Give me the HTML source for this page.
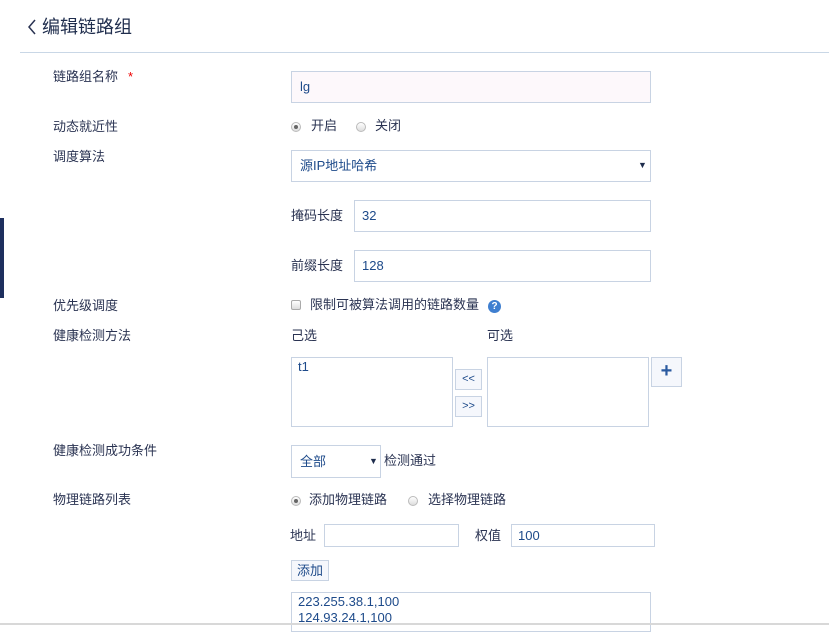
<!DOCTYPE html>
<html><head><meta charset="utf-8"><style>
*{margin:0;padding:0;box-sizing:border-box}
body{width:829px;height:625px;overflow:hidden;background:#fff;position:relative;font-family:"Liberation Sans","Noto Sans CJK SC",sans-serif;font-size:13px;color:#2a3352}
.a{position:absolute;white-space:nowrap;line-height:16px}
.box{position:absolute;border:1px solid #c8d3e3;background:#fff}
.v{color:#1d4a8a}
.rad{position:absolute;width:10px;height:10px;border-radius:50%;border:1px solid #bbb;background:linear-gradient(#fff,#ddd)}
.rad.on::after{content:"";position:absolute;left:2px;top:2px;width:4px;height:4px;border-radius:50%;background:#666}
.btn{position:absolute;border:1px solid #c8d3e3;background:#f5f7fc;color:#1d4a8a;text-align:center}
</style></head><body>
<svg style="position:absolute;left:27px;top:19px" width="10" height="16"><path d="M8 1 L2 8 L8 15" stroke="#2a3352" stroke-width="1.5" fill="none"/></svg>
<div class="a" style="left:42px;top:15px;font-size:18px;line-height:24px;color:#1f2d4d">编辑链路组</div>
<div style="position:absolute;left:20px;top:52px;width:809px;height:1px;background:#c9d7e6"></div>
<div style="position:absolute;left:0;top:218px;width:4px;height:80px;background:#1e2f5e"></div>

<div class="a" style="left:53px;top:69px">链路组名称</div>
<div class="a" style="left:128px;top:69px;color:#e00">*</div>
<div class="box" style="left:291px;top:71px;width:360px;height:32px;background:#fdf8fb"></div>
<div class="a v" style="left:300px;top:79px">lg</div>

<div class="a" style="left:53px;top:119px">动态就近性</div>
<div class="rad on" style="left:291px;top:122px"></div><div class="a" style="left:311px;top:118px">开启</div>
<div class="rad" style="left:356px;top:122px"></div><div class="a" style="left:375px;top:118px">关闭</div>

<div class="a" style="left:53px;top:149px">调度算法</div>
<div class="box" style="left:291px;top:150px;width:360px;height:32px"></div>
<div class="a v" style="left:300px;top:158px">源IP地址哈希</div>
<div class="a" style="left:638px;top:157px;font-size:9px;color:#1f2d4d">▼</div>

<div class="a" style="left:291px;top:208px">掩码长度</div>
<div class="box" style="left:354px;top:200px;width:297px;height:32px"></div>
<div class="a v" style="left:362px;top:208px">32</div>
<div class="a" style="left:291px;top:258px">前缀长度</div>
<div class="box" style="left:354px;top:250px;width:297px;height:32px"></div>
<div class="a v" style="left:362px;top:258px">128</div>

<div class="a" style="left:53px;top:298px">优先级调度</div>
<div style="position:absolute;left:291px;top:300px;width:10px;height:10px;border:1px solid #aaa;border-radius:2px;background:linear-gradient(#fff,#ddd)"></div>
<div class="a" style="left:310px;top:297px">限制可被算法调用的链路数量</div>
<div style="position:absolute;left:488px;top:300px;width:13px;height:13px;border-radius:50%;background:#3f7fd0;color:#fff;font-size:10px;line-height:13px;text-align:center;font-weight:bold">?</div>

<div class="a" style="left:53px;top:328px">健康检测方法</div>
<div class="a" style="left:291px;top:328px">己选</div>
<div class="a" style="left:487px;top:328px">可选</div>
<div class="box" style="left:291px;top:357px;width:162px;height:70px"></div>
<div class="a v" style="left:298px;top:359px">t1</div>
<div class="btn" style="left:455px;top:369px;width:27px;height:21px;font-size:11px;line-height:19px">&lt;&lt;</div>
<div class="btn" style="left:455px;top:396px;width:27px;height:21px;font-size:11px;line-height:19px">&gt;&gt;</div>
<div class="box" style="left:487px;top:357px;width:162px;height:70px"></div>
<div class="btn" style="left:651px;top:357px;width:31px;height:30px;font-size:20px;line-height:26px;font-weight:bold;color:#2a5aa0">+</div>

<div class="a" style="left:53px;top:443px">健康检测成功条件</div>
<div class="box" style="left:291px;top:445px;width:90px;height:33px"></div>
<div class="a v" style="left:300px;top:454px">全部</div>
<div class="a" style="left:369px;top:453px;font-size:9px;color:#1f2d4d">▼</div>
<div class="a" style="left:384px;top:453px">检测通过</div>

<div class="a" style="left:53px;top:492px">物理链路列表</div>
<div class="rad on" style="left:291px;top:496px"></div><div class="a" style="left:309px;top:492px">添加物理链路</div>
<div class="rad" style="left:408px;top:496px"></div><div class="a" style="left:428px;top:492px">选择物理链路</div>

<div class="a" style="left:290px;top:528px">地址</div>
<div class="box" style="left:324px;top:524px;width:135px;height:23px"></div>
<div class="a" style="left:475px;top:528px">权值</div>
<div class="box" style="left:511px;top:524px;width:144px;height:23px"></div>
<div class="a v" style="left:518px;top:528px">100</div>

<div class="btn" style="left:291px;top:560px;width:38px;height:21px;line-height:19px;font-size:13px">添加</div>

<div class="box" style="left:291px;top:592px;width:360px;height:40px"></div>
<div class="a v" style="left:298px;top:594px">223.255.38.1,100</div>
<div class="a v" style="left:298px;top:610px">124.93.24.1,100</div>
<div style="position:absolute;left:0;top:623px;width:829px;height:2px;background:#d8d8d8"></div>
</body></html>
